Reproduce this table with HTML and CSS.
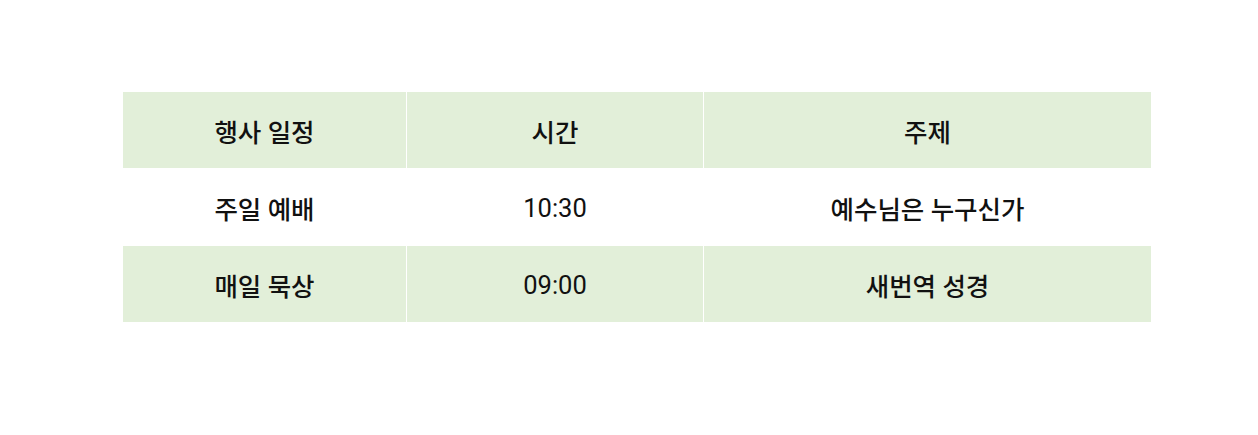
FILE: index.html
```html
<!DOCTYPE html>
<html lang="ko">
<head>
<meta charset="utf-8">
<link rel="stylesheet" href="styles.css">
</head>
<body>
<div class="schedule">
  <div class="cell head">행사 일정</div>
  <div class="cell head">시간</div>
  <div class="cell head">주제</div>
  <div class="cell">주일 예배</div>
  <div class="cell time">10:30</div>
  <div class="cell">예수님은 누구신가</div>
  <div class="cell shade">매일 묵상</div>
  <div class="cell shade time">09:00</div>
  <div class="cell shade">새번역 성경</div>
</div>
</body>
</html>
```
FILE: styles.css
```css
html, body {
  margin: 0;
  background: #ffffff;
}
body {
  padding: 92px 0 0 123px;
  font-family: Roboto, "Noto Sans CJK KR", sans-serif;
  color: #111;
}
.schedule {
  width: 1028px;
  display: grid;
  grid-template-columns: 283px 296px 447px;
  grid-auto-rows: 76px;
  column-gap: 1px;
  row-gap: 1px;
  background: #ffffff;
}
.cell {
  display: flex;
  align-items: center;
  justify-content: center;
  padding-top: 1px;
  font-size: 25.5px;
  font-weight: 500;
  background: #ffffff;
}
.time {
  font-weight: 400;
}
.head, .shade {
  background: #e2efd9;
}
```
